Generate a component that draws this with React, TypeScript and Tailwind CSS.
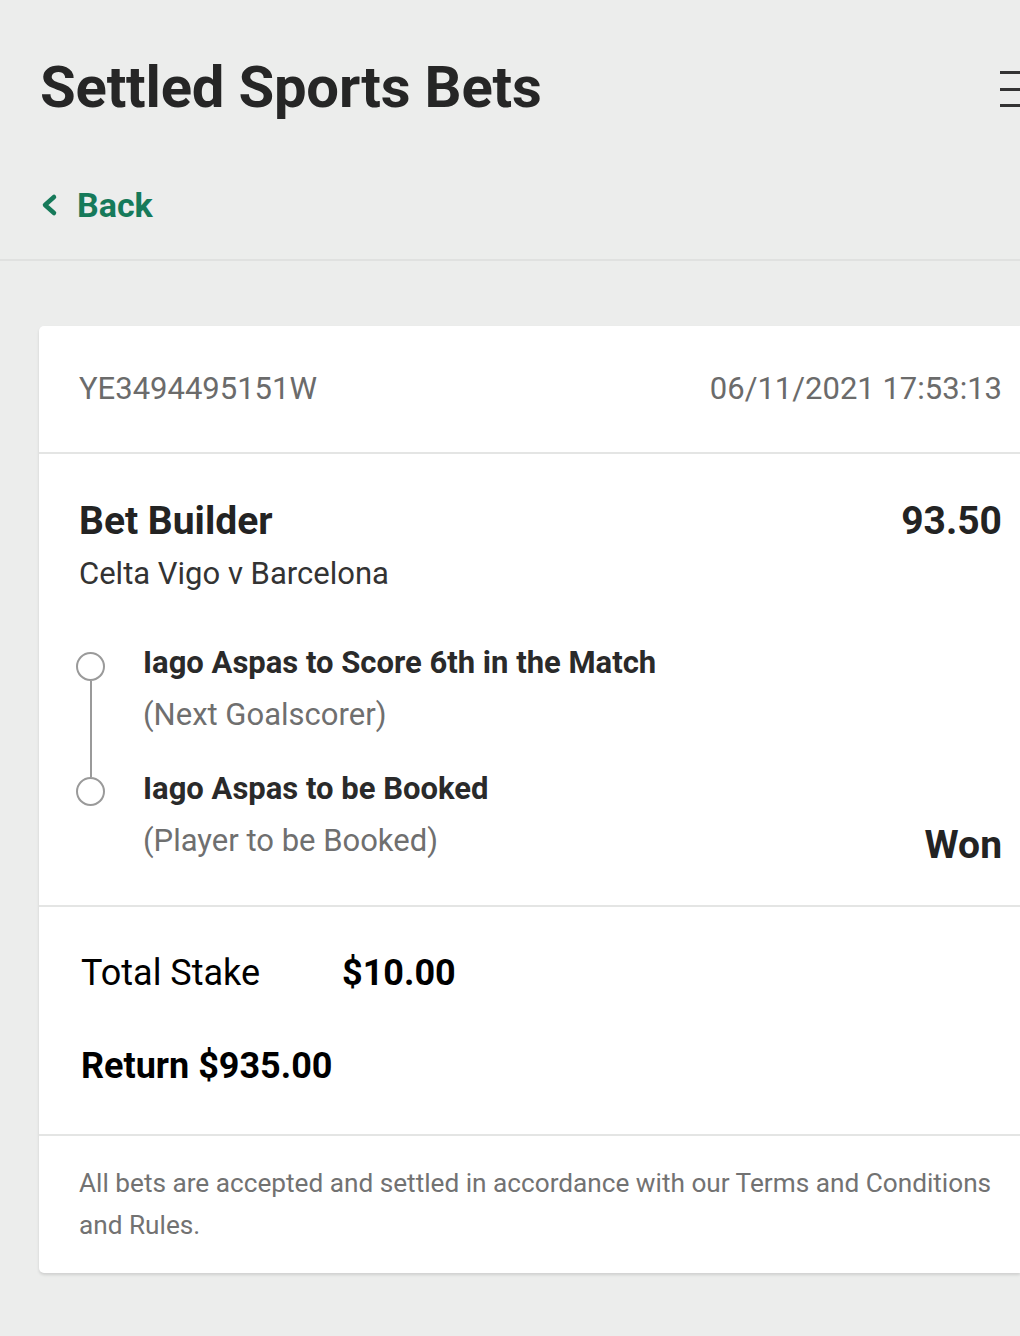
import { ReactNode } from "react";

const legs = [
  { title: "Iago Aspas to Score 6th in the Match", market: "(Next Goalscorer)" },
  { title: "Iago Aspas to be Booked", market: "(Player to be Booked)" },
];

const Section = ({ children, className = "" }: { children: ReactNode; className?: string }) => (
  <div className={`border-b-2 border-[#e4e5e4] pl-[40px] pr-[18px] ${className}`}>{children}</div>
);

const App = () => {
  return (
    <div
      className="min-h-[1336px] w-full overflow-hidden bg-[#ecedec] text-[#232323]"
      style={{ fontFamily: "Roboto, 'Liberation Sans', sans-serif" }}
    >
      <header className="border-b-2 border-[#e0e1e0] pl-[40px] pt-[54px] pb-[34px]">
        <div className="flex items-center justify-between">
          <h1 className="text-[58px] font-bold leading-[66px] tracking-[-0.2px] text-[#262626]">
            Settled Sports Bets
          </h1>
          <div className="mt-[4px] flex w-[20px] flex-col gap-[13.5px]">
            <span className="block h-[3px] w-full bg-[#333]" />
            <span className="block h-[3px] w-full bg-[#333]" />
            <span className="block h-[3px] w-full bg-[#333]" />
          </div>
        </div>
        <button className="mt-[65px] flex h-[40px] items-center gap-[19px] text-[#167a5a]">
          <svg width="18" height="24" viewBox="0 0 18 24" fill="none">
            <polyline
              points="14,4 5,12 14,20"
              stroke="currentColor"
              strokeWidth="4.5"
              strokeLinecap="round"
              strokeLinejoin="round"
            />
          </svg>
          <span className="text-[34px] font-bold leading-[40px]">Back</span>
        </button>
      </header>

      <div className="ml-[39px] mt-[65px] rounded-tl-[5px] rounded-bl-[5px] bg-white shadow-[0_2px_3px_rgba(0,0,0,0.12)]">
        <Section className="flex h-[128px] items-center justify-between text-[31px] leading-[36px] text-[#6b6b6b]">
          <span>YE3494495151W</span>
          <span>06/11/2021 17:53:13</span>
        </Section>

        <Section className="pt-[45px] pb-[46px]">
          <div className="flex items-center justify-between text-[39px] font-bold leading-[44px]">
            <span>Bet Builder</span>
            <span>93.50</span>
          </div>
          <p className="mt-[13px] text-[31px] leading-[36px] text-[#333]">Celta Vigo v Barcelona</p>

          <div className="mt-[53px] flex items-end justify-between">
            <div className="flex gap-[38px]">
              <div className="-ml-[3px] mt-[7px] flex w-[29px] flex-col items-center">
                <span className="block h-[29px] w-[29px] rounded-full border-2 border-[#9a9a9a]" />
                <span className="block h-[96px] w-[2px] bg-[#9a9a9a]" />
                <span className="block h-[29px] w-[29px] rounded-full border-2 border-[#9a9a9a]" />
              </div>
              <div className="flex flex-col gap-[38px]">
                {legs.map((leg) => (
                  <div key={leg.title} className="flex flex-col gap-[16px]">
                    <span className="text-[31px] font-bold leading-[36px] text-[#2a2a2a]">{leg.title}</span>
                    <span className="text-[31px] leading-[36px] text-[#6f6f6f]">{leg.market}</span>
                  </div>
                ))}
              </div>
            </div>
            <span className="mb-[-8px] text-[39px] font-bold leading-[44px]">Won</span>
          </div>
        </Section>

        <Section className="pt-[44px] pb-[46px] pl-[42px] text-black">
          <div className="flex items-center text-[36px] leading-[44px]">
            <span className="w-[261px]">Total Stake</span>
            <span className="font-bold">$10.00</span>
          </div>
          <p className="mt-[49px] text-[36px] font-bold leading-[44px]">Return $935.00</p>
        </Section>

        <div className="pl-[40px] pr-[18px] pt-[26px] pb-[27px] text-[26.2px] leading-[42px] text-[#727272]">
          All bets are accepted and settled in accordance with our Terms and Conditions and Rules.
        </div>
      </div>
    </div>
  );
};

export default App;
